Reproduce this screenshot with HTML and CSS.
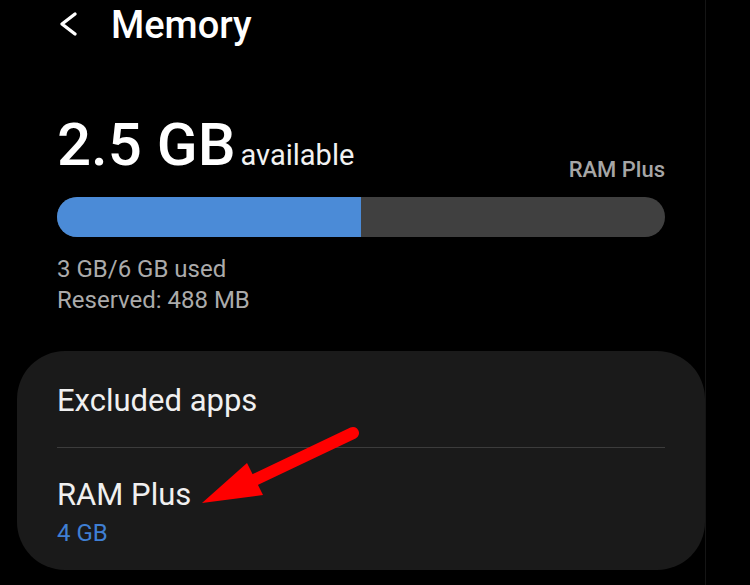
FILE: index.html
```
<!DOCTYPE html>
<html>
<head>
    <title>Memory</title>
    <meta name="viewport" content="width=device-width, initial-scale=1">
    <link rel="stylesheet" href="styles.css">
</head>
<body>
    <div class="screen">
        <div class="header">
            <svg class="back" width="20" height="26" viewBox="0 0 20 26">
                <polyline points="16,3 3,13 16,23" fill="none" stroke="#ffffff" stroke-width="3.4" stroke-linecap="round" stroke-linejoin="round"/>
            </svg>
            <h1>Memory</h1>
        </div>

        <div class="summary">
            <div class="available">
                <span class="amount">2.5 GB</span>
                <span class="unit">available</span>
            </div>
            <div class="plus-label">RAM Plus</div>
        </div>

        <div class="bar">
            <div class="bar-used" style="width: 50%"></div>
        </div>

        <p class="usage">3 GB/6 GB used</p>
        <p class="usage">Reserved: 488 MB</p>

        <div class="card">
            <div class="item first">
                <div class="item-title">Excluded apps</div>
            </div>
            <div class="divider"></div>
            <div class="item">
                <div class="item-title">RAM Plus</div>
                <div class="item-value">4 GB</div>
            </div>
        </div>

        <!-- red arrow pointing at RAM Plus -->
        <svg class="arrow" width="180" height="100" viewBox="0 0 180 100">
            <line x1="163" y1="13" x2="58" y2="63" stroke="#ff0000" stroke-width="12" stroke-linecap="round"/>
            <polygon points="12,83 57,43 73,75" fill="#ff0000"/>
        </svg>
    </div>
</body>
</html>
```

FILE: styles.css
```
body {
    margin: 0;
    background-color: #000000;
    font-family: Roboto, "Liberation Sans", sans-serif;
    color: #ffffff;
}

.screen {
    position: relative;
    width: 706px;
    height: 585px;
    border-right: 1px solid #151515;
    box-sizing: border-box;
}

.header {
    display: flex;
    align-items: center;
    height: 50px;
    padding-left: 59px;
}

.back {
    display: block;
    margin-top: -2px;
}

h1 {
    margin: 0 0 0 32px;
    font-size: 38px;
    font-weight: 500;
    line-height: 50px;
}

.summary {
    display: flex;
    justify-content: space-between;
    align-items: flex-end;
    margin: 63px 40px 0 57px;
}

.available {
    display: flex;
    align-items: baseline;
    padding-bottom: 5px;
}

.amount {
    font-size: 60px;
    font-weight: 500;
    line-height: 64px;
}

.unit {
    font-size: 29px;
    line-height: 30px;
    margin-left: 5px;
    color: #f2f2f2;
}

.plus-label {
    font-size: 22px;
    font-weight: 500;
    line-height: 24px;
    color: #a6a6a6;
}

.bar {
    display: flex;
    height: 40px;
    margin: 15px 40px 0 57px;
    border-radius: 20px;
    background-color: #404040;
    overflow: hidden;
}

.bar-used {
    background-color: #4b8bd7;
}

.usage {
    margin: 0 0 0 57px;
    font-size: 24px;
    line-height: 31px;
    color: #ababab;
}

.usage:first-of-type {
    margin-top: 17px;
}

.card {
    margin: 35px 0 0 17px;
    padding: 0 40px 24px 40px;
    border-radius: 48px;
    background-color: #1a1a1a;
}

.item {
    padding-top: 27px;
}

.item.first {
    padding-top: 30px;
    padding-bottom: 26px;
}

.item-title {
    font-size: 31px;
    line-height: 40px;
    color: #f0f0f0;
}

.item-value {
    margin-top: 5px;
    font-size: 24px;
    line-height: 26px;
    color: #3f7fd3;
}

.divider {
    height: 1px;
    background-color: #3c3c3c;
}

.arrow {
    position: absolute;
    left: 190px;
    top: 420px;
}
```
